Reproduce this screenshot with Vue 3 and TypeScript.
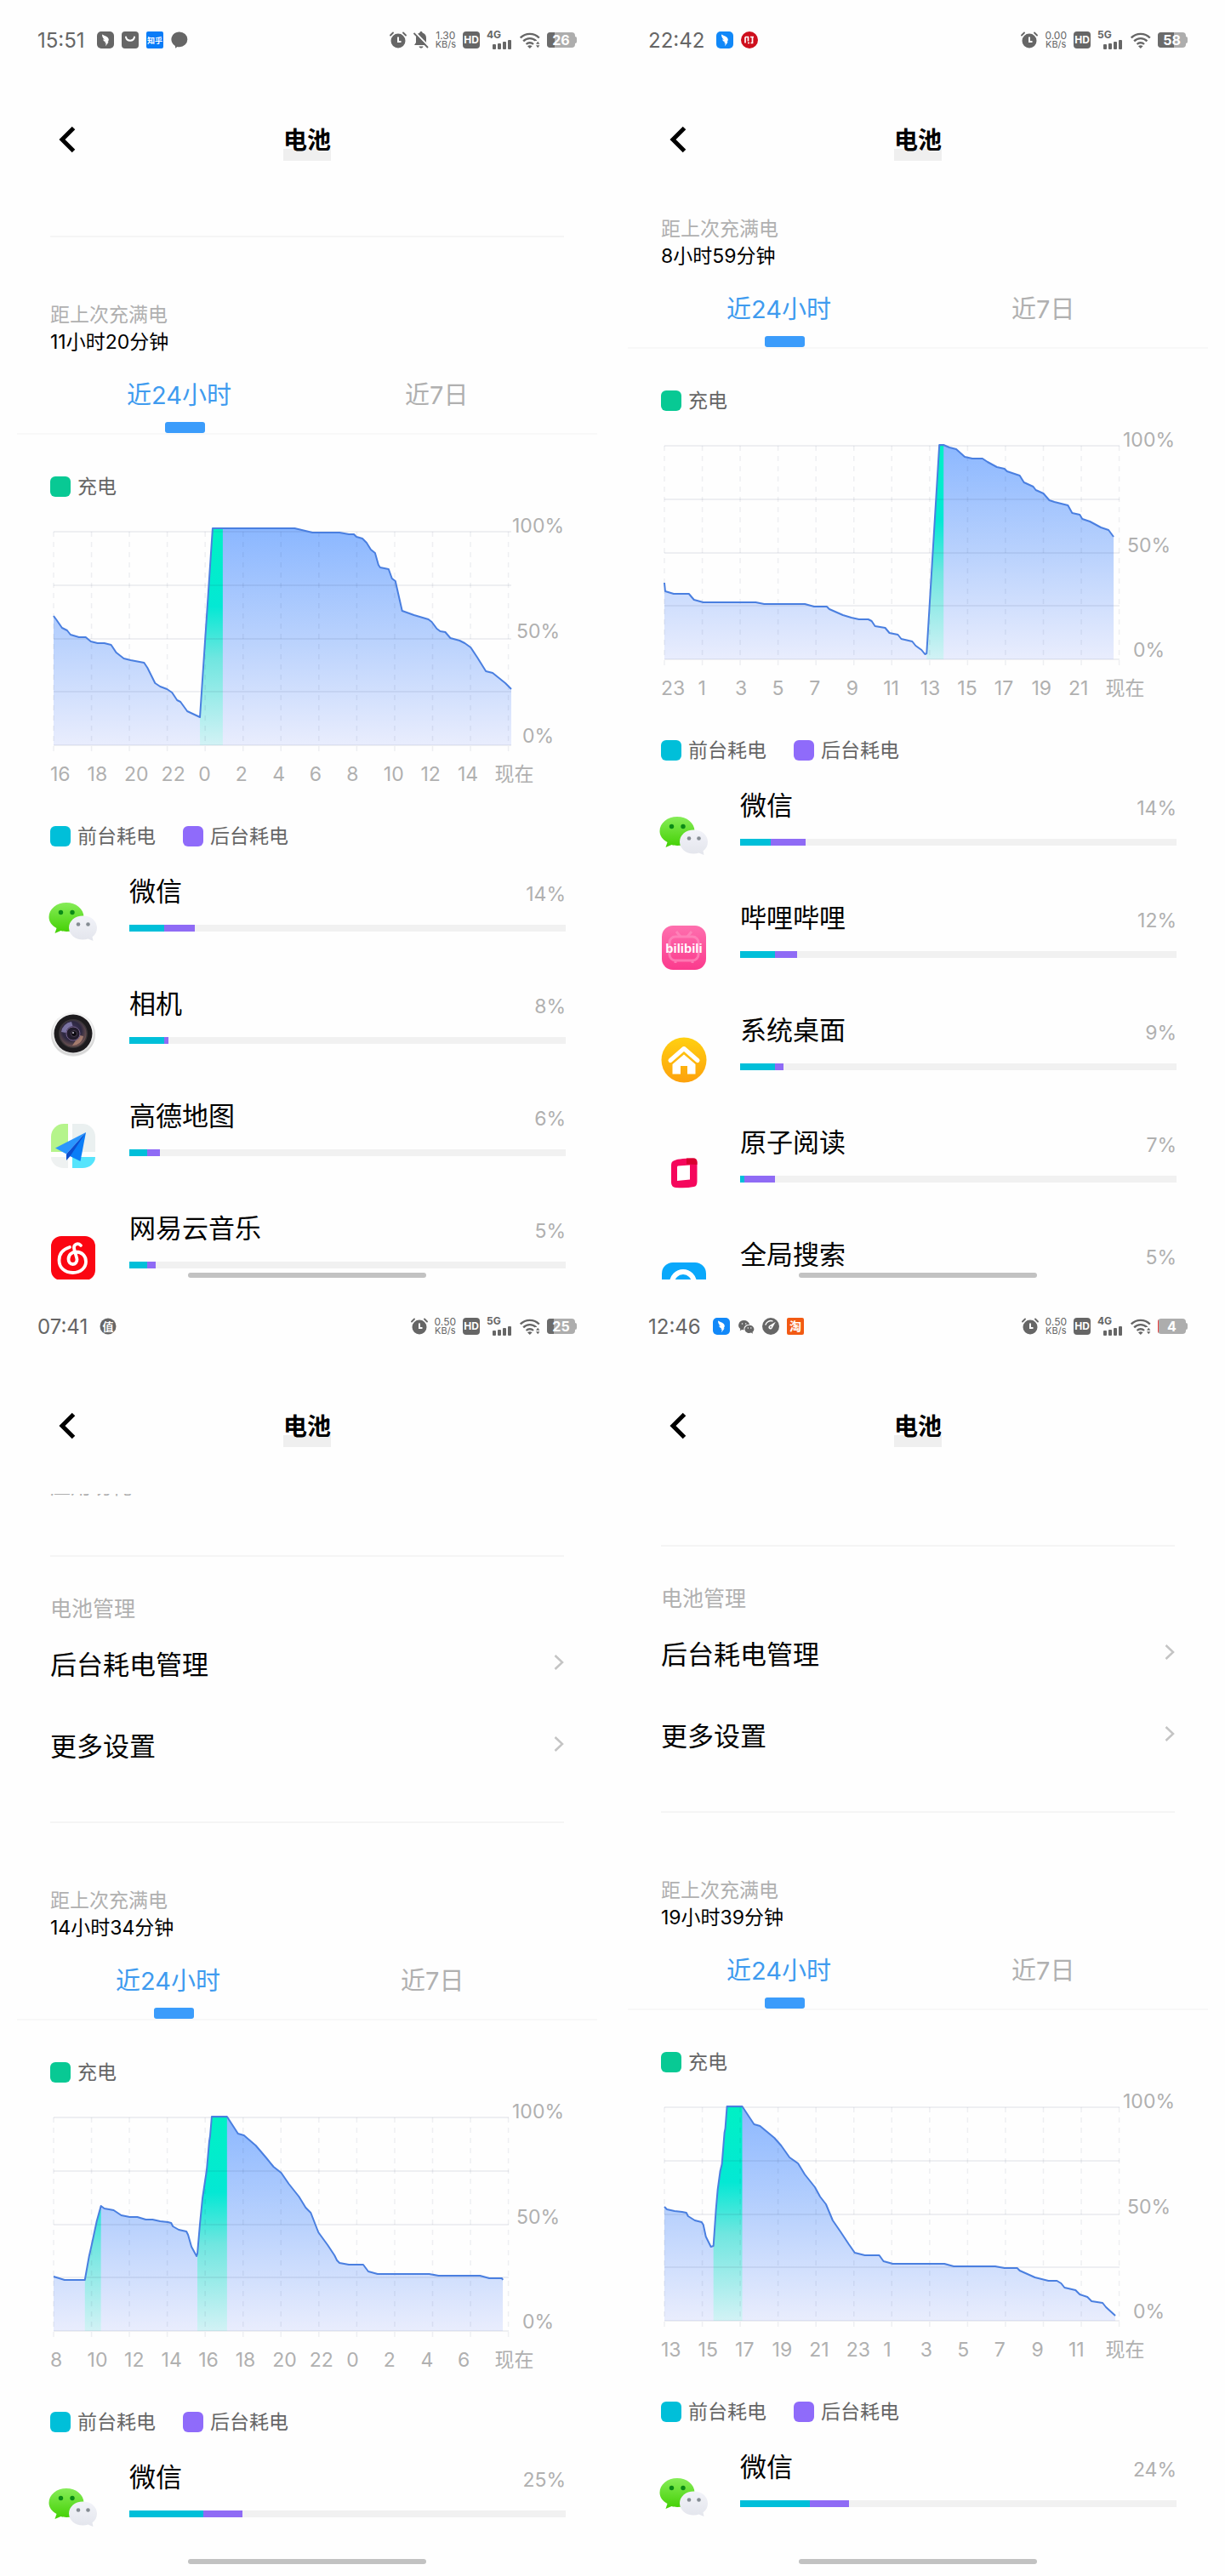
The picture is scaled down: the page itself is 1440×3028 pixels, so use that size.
<script setup lang="ts">
type Point = [number, number]

interface AppUsage {
  name: string
  icon: string
  percent: number
  front: number
  back: number
}

interface Screen {
  id: string
  time: string
  notices: string[]
  muted: boolean
  speed: string
  network: string
  wifiBusy: boolean
  battery: number
  lead: 'divider' | 'none' | 'caption' | 'short'
  manage: boolean
  elapsed: string
  shifted: boolean
  hours: string[]
  gridEnd: number
  points: Point[]
  charging: Point[]
  apps: AppUsage[]
}

const BASE = 275
const GRID_TOP = 24
const GRID_STEP = 63

const screens: Screen[] = [
  {
    id: 's1',
    time: '15:51',
    notices: ['bird', 'bag', 'zhihu', 'chat'],
    muted: true,
    speed: '1.30',
    network: '4G',
    wifiBusy: true,
    battery: 26,
    lead: 'divider',
    manage: false,
    elapsed: '11小时20分钟',
    shifted: true,
    hours: ['16', '18', '20', '22', '0', '2', '4', '6', '8', '10', '12', '14', '现在'],
    gridEnd: 545,
    points: [
      [4, 123], [7, 127], [14, 137], [20, 140], [24, 145], [34, 148], [42, 148], [48, 153], [56, 155], [64, 155],
      [72, 157], [78, 166], [87, 173], [95, 175], [111, 178], [115, 184], [124, 202], [130, 206], [138, 209],
      [144, 213], [150, 222], [154, 224], [162, 235], [177, 242], [192, 20], [204, 20], [289, 20], [310, 25],
      [342, 25], [353, 27], [359, 27], [362, 30], [369, 32], [374, 37], [379, 45], [384, 49], [388, 63], [390, 66],
      [400, 68], [404, 79], [408, 82], [416, 117], [430, 122], [447, 127], [451, 130], [457, 138], [461, 141],
      [467, 142], [473, 149], [484, 152], [490, 155], [497, 160], [505, 172], [515, 188], [523, 190], [538, 202],
      [545, 209],
    ],
    charging: [[177, 204]],
    apps: [
      { name: '微信', icon: 'wechat', percent: 14, front: 8, back: 7 },
      { name: '相机', icon: 'camera', percent: 8, front: 8, back: 1 },
      { name: '高德地图', icon: 'amap', percent: 6, front: 4, back: 3 },
      { name: '网易云音乐', icon: 'music', percent: 5, front: 4, back: 2 },
    ],
  },
  {
    id: 's2',
    time: '22:42',
    notices: ['bird-blue', 'ithome'],
    muted: false,
    speed: '0.00',
    network: '5G',
    wifiBusy: false,
    battery: 58,
    lead: 'none',
    manage: false,
    elapsed: '8小时59分钟',
    shifted: false,
    hours: ['23', '1', '3', '5', '7', '9', '11', '13', '15', '17', '19', '21', '现在'],
    gridEnd: 542,
    points: [
      [4, 185], [5, 195], [15, 198], [33, 198], [39, 205], [50, 208], [112, 208], [122, 210], [170, 210], [181, 213],
      [196, 213], [199, 216], [215, 223], [225, 226], [234, 228], [245, 228], [249, 230], [253, 236], [265, 238],
      [270, 244], [280, 246], [284, 251], [297, 254], [301, 259], [308, 264], [312, 269], [314, 268], [329, 23],
      [334, 23], [341, 26], [349, 28], [359, 37], [368, 39], [380, 39], [386, 43], [397, 49], [406, 51], [409, 54],
      [424, 59], [429, 67], [440, 72], [443, 76], [452, 80], [459, 88], [465, 90], [481, 94], [486, 103], [495, 105],
      [498, 110], [507, 113], [520, 120], [529, 123], [535, 131],
    ],
    charging: [[314, 334]],
    apps: [
      { name: '微信', icon: 'wechat', percent: 14, front: 7, back: 8 },
      { name: '哔哩哔哩', icon: 'bilibili', percent: 12, front: 8, back: 5 },
      { name: '系统桌面', icon: 'home', percent: 9, front: 8, back: 2 },
      { name: '原子阅读', icon: 'reader', percent: 7, front: 1, back: 7 },
      { name: '全局搜索', icon: 'search', percent: 5, front: 3, back: 3 },
    ],
  },
  {
    id: 's3',
    time: '07:41',
    notices: ['zhi'],
    muted: false,
    speed: '0.50',
    network: '5G',
    wifiBusy: true,
    battery: 25,
    lead: 'caption',
    manage: true,
    elapsed: '14小时34分钟',
    shifted: false,
    hours: ['8', '10', '12', '14', '16', '18', '20', '22', '0', '2', '4', '6', '现在'],
    gridEnd: 542,
    points: [
      [4, 211], [17, 215], [41, 215], [46, 187], [49, 174], [55, 146], [60, 128], [64, 131], [75, 133], [84, 139],
      [94, 141], [103, 141], [113, 144], [121, 144], [130, 146], [139, 147], [143, 148], [145, 152], [152, 156],
      [161, 158], [163, 162], [167, 176], [173, 187], [174, 184], [177, 149], [180, 119], [183, 99], [185, 86],
      [188, 52], [189, 46], [191, 23], [209, 23], [222, 43], [229, 45], [243, 57], [255, 71], [264, 82], [273, 89],
      [282, 102], [294, 117], [302, 130], [308, 136], [317, 159], [328, 174], [336, 186], [339, 192], [342, 195],
      [353, 197], [370, 197], [376, 205], [387, 208], [448, 208], [459, 210], [508, 210], [519, 213], [534, 213],
      [535, 215],
    ],
    charging: [[41, 60], [174, 209]],
    apps: [{ name: '微信', icon: 'wechat', percent: 25, front: 17, back: 9 }],
  },
  {
    id: 's4',
    time: '12:46',
    notices: ['bird-blue', 'wechat', 'gauge', 'taobao'],
    muted: false,
    speed: '0.50',
    network: '4G',
    wifiBusy: true,
    battery: 4,
    lead: 'short',
    manage: true,
    elapsed: '19小时39分钟',
    shifted: false,
    hours: ['13', '15', '17', '19', '21', '23', '1', '3', '5', '7', '9', '11', '现在'],
    gridEnd: 542,
    points: [
      [4, 141], [7, 144], [16, 146], [25, 147], [30, 148], [32, 152], [40, 157], [48, 159], [50, 162], [53, 176],
      [59, 188], [62, 187], [65, 144], [67, 121], [70, 99], [72, 91], [75, 54], [76, 49], [78, 23], [96, 23],
      [110, 44], [117, 46], [134, 60], [142, 69], [152, 83], [162, 90], [170, 103], [182, 118], [188, 129], [195, 138],
      [203, 157], [212, 170], [222, 185], [229, 195], [241, 198], [258, 198], [263, 205], [274, 208], [335, 208],
      [346, 211], [395, 211], [406, 213], [421, 213], [424, 216], [442, 224], [458, 228], [468, 228], [473, 231],
      [477, 236], [490, 239], [495, 244], [504, 247], [509, 252], [522, 254], [526, 259], [537, 269],
    ],
    charging: [[62, 96]],
    apps: [{ name: '微信', icon: 'wechat', percent: 24, front: 16, back: 9 }],
  },
]

const gridRows = [0, 1, 2, 3, 4].map((i) => GRID_TOP + i * GRID_STEP - (i > 2 ? 1 : 0))
const gridCols = Array.from({ length: 13 }, (_, i) => 4 + i * 44.8)

function line(points: Point[]): string {
  return points.map(([x, y]) => `${x},${y}`).join(' ')
}

function area(points: Point[], from: number, to: number): string {
  const inside = points.filter(([x]) => x >= from && x <= to)
  return `${from},${BASE} ${line(inside)} ${to},${BASE}`
}

function fullArea(points: Point[]): string {
  return area(points, points[0][0], points[points.length - 1][0])
}
</script>

<template>
  <main class="board">
    <section v-for="s in screens" :key="s.id" class="screen">
      <div class="status">
        <div class="status-left">
          <span class="clock">{{ s.time }}</span>
          <span class="notices">
            <svg v-for="n in s.notices" :key="n" class="notice" viewBox="0 0 20 20" aria-hidden="true">
              <template v-if="n === 'bird' || n === 'bird-blue'">
                <rect width="20" height="20" rx="5" :fill="n === 'bird' ? '#666' : '#1188f8'" />
                <path d="M6 3.500c3 1.600 7.500 2.600 7.800 6 .1 1-.6 2-1.300 2.900l1.200.2-3.700 4.600.8-3.500-1.600-.1c.5-.6.7-1 .6-1.500-1.500-.4-2.400-1.500-2.700-2.800 1 .3 1.400.3 1.900.2C7 8.300 6 6 6 3.500z" fill="#fff" />
              </template>
              <template v-else-if="n === 'bag'">
                <rect width="20" height="20" rx="4" fill="#666" />
                <path d="M5 6.500c1 5.500 9 5.500 10 0" fill="none" stroke="#fff" stroke-width="2" stroke-linecap="round" />
              </template>
              <template v-else-if="n === 'zhihu'">
                <rect width="20" height="20" rx="2" fill="#0a7cf7" />
                <text x="10" y="13.500" text-anchor="middle" font-size="9" font-weight="700" fill="#fff">知乎</text>
              </template>
              <template v-else-if="n === 'chat'">
                <path d="M10 .5a9.300 8.800 0 0 1 0 17.700c-1 0-1.800-.1-2.600-.3L5.200 19.800l-.3-2.900A9 8.800 0 0 1 10 .5z" fill="#666" />
              </template>
              <template v-else-if="n === 'ithome'">
                <circle cx="10" cy="10" r="10" fill="#ce0f1d" />
                <path d="M5 6.500v7M8 13.500h2M5 6.500h3.500v5M11 6.500h4M13.500 6.500v7h-2" fill="none" stroke="#fff" stroke-width="1.700" />
              </template>
              <template v-else-if="n === 'zhi'">
                <circle cx="10" cy="10" r="9.500" fill="#666" />
                <text x="10" y="14.500" text-anchor="middle" font-size="13" font-weight="700" fill="#fff">值</text>
              </template>
              <template v-else-if="n === 'wechat'">
                <path d="M7.500 3a6.500 5.700 0 0 1 6.500 5c-4-.4-7 2.200-6.500 6.200-.9 0-1.700-.1-2.400-.3l-2.300 1.300.5-2.200A6.200 5.700 0 0 1 7.500 3z" fill="#666" />
                <path d="M14 8.800a5.300 4.600 0 0 1 3.600 8l.4 1.900-2-1.100a5.400 4.600 0 1 1-2-8.800z" fill="#666" />
                <g fill="#fff"><circle cx="5.500" cy="7" r=".8" /><circle cx="9.700" cy="7" r=".8" /><circle cx="12.300" cy="12" r=".7" /><circle cx="15.800" cy="12" r=".7" /></g>
              </template>
              <template v-else-if="n === 'gauge'">
                <circle cx="10" cy="10" r="10" fill="#666" />
                <path d="M4 8a6.500 6.500 0 0 1 8-4.200" fill="none" stroke="#fff" stroke-width="1.400" stroke-linecap="round" />
                <path d="M15.800 4.800L11.800 12a2.300 2.300 0 1 1-3-3z" fill="#fff" />
                <circle cx="10" cy="10.800" r=".9" fill="#666" />
              </template>
              <template v-else>
                <rect width="20" height="20" rx="2" fill="#f25a13" />
                <text x="10" y="15" text-anchor="middle" font-size="14" font-weight="700" fill="#fff">淘</text>
              </template>
            </svg>
          </span>
        </div>
        <div class="status-right">
          <svg class="notice" viewBox="0 0 20 20" aria-hidden="true">
            <circle cx="10" cy="11" r="8.500" fill="#666" />
            <path d="M1 4.500L4 1.500M19 4.500L16 1.500" stroke="#666" stroke-width="1.800" stroke-linecap="round" />
            <path d="M10 6.500v5.500h3.500" fill="none" stroke="#fff" stroke-width="2" />
          </svg>
          <svg v-if="s.muted" class="bell" viewBox="0 0 18 20" aria-hidden="true">
            <path d="M9 0c1 0 1.600.7 1.600 1.500 2.900.8 4.400 3.200 4.400 6V13l2 3H1l2-3V7.500c0-2.800 1.500-5.200 4.400-6C7.400.7 8 0 9 0z" fill="#666" />
            <path d="M6.500 17.500h5c-.4 1.500-1.300 2-2.500 2s-2.100-.5-2.500-2z" fill="#666" />
            <path d="M2 1L18 17.500" stroke="#fefefe" stroke-width="2" />
            <path d="M.5 2L17 19" stroke="#666" stroke-width="1.800" />
          </svg>
          <span class="speed"><span class="rate">{{ s.speed }}</span><span>KB/s</span></span>
          <span class="hd">HD</span>
          <span class="signal">
            <span class="network">{{ s.network }}</span>
            <svg class="bars" viewBox="0 0 24 12" aria-hidden="true">
              <g fill="#666"><rect y="6" width="4" height="6" rx="1" /><rect x="6" y="5" width="4" height="7" rx="1" /><rect x="12" y="3" width="4" height="9" rx="1" /><rect x="18" y="1" width="4" height="11" rx="1" /></g>
            </svg>
          </span>
          <svg class="wifi" viewBox="0 0 24 19" aria-hidden="true">
            <g fill="none" stroke="#666" stroke-width="2.400">
              <path d="M.8 6.500a15.500 15.500 0 0 1 22 0" />
              <path d="M4.200 10.300a10.700 10.700 0 0 1 15.200 0" />
              <path d="M7.600 14a6 6 0 0 1 8.400 0" />
            </g>
            <path d="M9 16.200q2.800-2 5.600 0L11.800 19z" fill="#666" />
            <g v-if="s.wifiBusy"><rect x="17.500" y="10" width="7" height="9" fill="#fefefe" /><path d="M19 13.800l2.200-3 2.200 3zM19 15.200l2.200 3 2.200-3z" fill="#666" /></g>
          </svg>
          <span class="battery">
            <span class="battery-body">
              <span class="battery-fill" :class="{ low: s.battery < 10 }" :style="{ width: s.battery + '%' }"></span>
              <span class="battery-text">{{ s.battery }}</span>
            </span>
            <span class="battery-cap"></span>
          </span>
        </div>
      </div>

      <header class="header">
        <button class="back" type="button" aria-label="返回">
          <svg viewBox="0 0 20 32" aria-hidden="true">
            <path d="M17.500 2.500L4 16l13.500 13.500" fill="none" stroke="#000" stroke-width="5" />
          </svg>
        </button>
        <h1 class="title">电池</h1>
      </header>

      <div class="view" :class="'lead-' + s.lead">
        <p v-if="s.lead === 'caption'" class="cut-caption">应用功耗</p>

        <template v-if="s.manage">
          <hr class="divider" />
          <h2 class="group-title">电池管理</h2>
          <nav class="menu">
            <a v-for="item in ['后台耗电管理', '更多设置']" :key="item" href="#" class="menu-item">
              <span>{{ item }}</span>
              <svg viewBox="0 0 12 18" aria-hidden="true">
                <path d="M1.500 1l8.500 8-8.500 8" fill="none" stroke="#c4c4c4" stroke-width="2.500" />
              </svg>
            </a>
          </nav>
        </template>
        <hr v-if="s.lead !== 'none'" class="divider" />

        <div class="since">
          <p class="since-label">距上次充满电</p>
          <p>{{ s.elapsed }}</p>
        </div>

        <div class="tabs" :class="{ shifted: s.shifted }" role="tablist">
          <button class="tab active" type="button" role="tab" aria-selected="true">近24小时</button>
          <button class="tab" type="button" role="tab" aria-selected="false">近7日</button>
        </div>

        <div class="legend charge"><span class="key"><i class="swatch green"></i>充电</span></div>

        <div class="chart">
          <svg viewBox="0 0 546 284" preserveAspectRatio="none" aria-hidden="true">
            <defs>
              <linearGradient :id="s.id + '-blue'" gradientUnits="userSpaceOnUse" x1="0" y1="20" x2="0" y2="275">
                <stop offset="0" stop-color="#8bb7ff" />
                <stop offset="0.5" stop-color="#b8d1fd" />
                <stop offset="1" stop-color="#e9edfd" />
              </linearGradient>
              <linearGradient :id="s.id + '-green'" gradientUnits="userSpaceOnUse" x1="0" y1="20" x2="0" y2="275">
                <stop offset="0" stop-color="#00f1c4" />
                <stop offset="0.36" stop-color="#04e8d4" />
                <stop offset="0.6" stop-color="#70e6e0" />
                <stop offset="1" stop-color="#d2f2f5" />
              </linearGradient>
            </defs>
            <polygon :points="fullArea(s.points)" :fill="`url(#${s.id}-blue)`" />
            <polygon v-for="c in s.charging" :key="c[0]" :points="area(s.points, c[0], c[1])" :fill="`url(#${s.id}-green)`" />
            <g stroke="#1a2a50" stroke-opacity="0.07">
              <line v-for="y in gridRows" :key="y" x1="4" :x2="s.gridEnd" :y1="y" :y2="y" stroke-width="2" />
              <line v-for="x in gridCols" :key="x" :x1="x" :x2="x" y1="24" y2="282" stroke-width="1.500" stroke-dasharray="6 6" />
            </g>
            <polyline :points="line(s.points)" fill="none" stroke="#4a7fe0" stroke-width="2" stroke-linejoin="round" />
          </svg>
          <div class="y-axis"><span>100%</span><span>50%</span><span>0%</span></div>
        </div>
        <div class="x-axis"><span v-for="h in s.hours" :key="h">{{ h }}</span></div>

        <div class="legend usage">
          <span class="key"><i class="swatch cyan"></i>前台耗电</span>
          <span class="key"><i class="swatch violet"></i>后台耗电</span>
        </div>

        <ul class="apps">
          <li v-for="a in s.apps" :key="a.name" class="app">
            <svg class="app-icon" viewBox="0 0 54 54" aria-hidden="true">
              <template v-if="a.icon === 'wechat'">
                <defs>
                  <linearGradient :id="s.id + '-wg'" x1="0" y1="0" x2="0" y2="1"><stop offset="0" stop-color="#86ec58" /><stop offset="1" stop-color="#43d003" /></linearGradient>
                  <linearGradient :id="s.id + '-ww'" x1="0" y1="0" x2="0" y2="1"><stop offset="0" stop-color="#f2f3f9" /><stop offset="1" stop-color="#e3e5ec" /></linearGradient>
                </defs>
                <path d="M19 5c11.500 0 20.500 7.500 20.500 17S30.500 39 19 39c-2.500 0-4.500-.3-6.500-.9L5.500 41l2-6C2 32-1.500 27.500-1.500 22 -1.500 12.500 7.500 5 19 5z" :fill="`url(#${s.id}-wg)`" />
                <ellipse cx="12.500" cy="16.500" rx="2.700" ry="2.800" fill="#0b8a17" /><ellipse cx="26" cy="16.500" rx="2.700" ry="2.800" fill="#0b8a17" />
                <path d="M38.500 20.500c9.500 0 16.500 6.200 16.500 14 0 4.700-2 8.200-5.500 10.700l1 4.800-6-2.400c-1.900.6-3.900.9-6 .9-9.500 0-16.500-6.200-16.500-14s7-14 16.500-14z" :fill="`url(#${s.id}-ww)`" />
                <circle cx="33" cy="30.500" r="2.300" fill="#858c93" /><circle cx="44.500" cy="30.500" r="2.300" fill="#858c93" />
              </template>
              <template v-else-if="a.icon === 'camera'">
                <defs>
                  <radialGradient id="lens" cx="0.450" cy="0.400" r="0.700"><stop offset="0" stop-color="#4a3c66" /><stop offset="0.500" stop-color="#2c2740" /><stop offset="1" stop-color="#8a6658" /></radialGradient>
                  <radialGradient id="rim" cx="0.500" cy="0.450" r="0.550"><stop offset="0.800" stop-color="#f4f4f4" /><stop offset="0.930" stop-color="#d2d2d2" /><stop offset="1" stop-color="#f0f0f0" /></radialGradient>
                </defs>
                <circle cx="27" cy="28" r="26" fill="url(#rim)" />
                <circle cx="27" cy="27" r="22.500" fill="#1d1b1e" />
                <circle cx="27" cy="27" r="17" fill="#3a3538" />
                <circle cx="27" cy="27" r="15.500" fill="url(#lens)" />
                <path d="M13 25a14 14 0 0 1 12-12l1.500 5a9 9 0 0 0-8 8z" fill="#8d86b8" opacity="0.800" />
                <path d="M39 30a13 13 0 0 1-13 11l4-6a9 9 0 0 0 5-6z" fill="#b98b77" opacity="0.800" />
                <circle cx="27" cy="27" r="8" fill="#221c2c" stroke="#74608a" />
                <circle cx="28" cy="27" r="3.500" fill="#0c0a10" stroke="#4b4052" />
                <circle cx="27" cy="26" r="1" fill="#c8c4d4" />
              </template>
              <template v-else-if="a.icon === 'amap'">
                <path d="M1 16A15 15 0 0 1 16 1h5v33H1z" fill="#b5f48b" />
                <path d="M26 1h12a15 15 0 0 1 15 15v18H26z" fill="#eaf0f0" />
                <path d="M1 40h20v13h-5A15 13 0 0 1 1 40z" fill="#eef1f1" />
                <path d="M26 40h27a15 13 0 0 1-15 13H26z" fill="#55e4fc" />
                <path d="M42 11L6 29.500l13 7z" fill="#2a96fd" />
                <path d="M42 11L20 37.500 35.500 45z" fill="#0a7df7" />
                <path d="M42 11L19 36.500v7.500l4.500-5z" fill="#0b4ed0" />
              </template>
              <template v-else-if="a.icon === 'music'">
                <rect x="1" y="1" width="52" height="52" rx="12" fill="#fb0612" />
                <path d="M23 14c-8 2.500-12.500 8-12.500 15.500C10.500 38 17 44 26.500 44S42 38 42 31s-5-11.500-11.500-11.500c-5 0-9 3.500-9 8.500 0 3.500 2 6 5 6s5-2.500 5-5.500c0-2-3.500-11.500-3.500-14 0-4 4.500-6 8-2.500" fill="none" stroke="#fff" stroke-width="3.800" stroke-linecap="round" stroke-linejoin="round" />
              </template>
              <template v-else-if="a.icon === 'bilibili'">
                <defs><linearGradient id="pink" x1="0" y1="0" x2="0" y2="1"><stop offset="0" stop-color="#fe6fae" /><stop offset="1" stop-color="#fb3a8d" /></linearGradient></defs>
                <rect x="1" y="1" width="52" height="52" rx="13" fill="url(#pink)" />
                <g fill="none" stroke="#ff8dbf" stroke-width="3" opacity="0.700"><rect x="10" y="14" width="34" height="28" rx="7" /><path d="M18 8l5 6M36 8l-5 6M17 42v3M37 42v3" /></g>
                <text x="27" y="33" text-anchor="middle" font-size="15" font-weight="700" font-family="Liberation Sans, sans-serif" fill="#fff">bilibili</text>
              </template>
              <template v-else-if="a.icon === 'home'">
                <defs><linearGradient id="gold" x1="0" y1="0" x2="0" y2="1"><stop offset="0" stop-color="#ffd011" /><stop offset="1" stop-color="#fda10c" /></linearGradient></defs>
                <circle cx="27" cy="27" r="26.500" fill="url(#gold)" />
                <path d="M11 27.500l16-14 16 14" fill="none" stroke="#fff" stroke-width="5" stroke-linecap="round" stroke-linejoin="round" />
                <path d="M27 20.500L40.500 32v11.500H31V34h-8v9.500h-9.500V32z" fill="#fff" />
              </template>
              <template v-else-if="a.icon === 'reader'">
                <path d="M14 14q5-3.500 24-3.500 4.500 0 4.500 5v22q0 6-4 6.500-9 2-21 1-5.500-.5-5.500-6V19q0-4 2-5z" fill="#f5075c" />
                <path d="M30 10.500h8q4.500 0 4.500 5V18L30 17.500z" fill="#d8002f" />
                <path d="M20 19.500l14-1v17l-15 1.500V21q0-1.200 1-1.500z" fill="#fff" />
              </template>
              <template v-else>
                <rect x="1" y="1" width="52" height="52" rx="13" fill="#09a8fb" />
                <circle cx="26" cy="25" r="13" fill="none" stroke="#fff" stroke-width="6" />
                <path d="M35 35l7 7" stroke="#fff" stroke-width="5" stroke-linecap="round" />
              </template>
            </svg>
            <div class="app-body">
              <div class="app-line"><span class="app-name">{{ a.name }}</span><span class="app-percent">{{ a.percent }}%</span></div>
              <div class="track">
                <span class="front" :style="{ width: a.front + '%' }"></span>
                <span class="rear" :style="{ width: a.back + '%' }"></span>
              </div>
            </div>
          </li>
        </ul>
      </div>
      <span class="home-bar"></span>
    </section>
  </main>
</template>

<style>
body {
  background: #fefefe;
}
</style>

<style scoped>
.board {
  display: grid;
  grid-template-columns: 1fr 1fr;
  row-gap: 8px;
  padding: 0 2px 12px;
  font-family: Inter, "Noto Sans CJK SC", sans-serif;
  font-size: 23px;
  color: #000;
}

.screen {
  position: relative;
  min-width: 0;
}

h1, h2, p, ul {
  margin: 0;
  padding: 0;
  font-weight: 400;
}

button {
  border: 0;
  padding: 0;
  background: none;
  font-family: inherit;
}

.status {
  display: flex;
  align-items: center;
  justify-content: space-between;
  height: 94px;
  padding: 0 42px;
  color: #666;
}

.status-left,
.status-right,
.notices {
  display: flex;
  align-items: center;
}

.status-left {
  gap: 14px;
}

.status-right {
  gap: 8px;
}

.notices {
  gap: 9px;
}

.clock {
  font-size: 24px;
}

.notice {
  width: 20px;
  height: 20px;
}

.bell {
  width: 18px;
  height: 20px;
}

.speed {
  display: flex;
  flex-direction: column;
  align-items: center;
  font-size: 11px;
  line-height: 10px;
}

.rate {
  font-size: 12px;
}

.hd {
  width: 20px;
  height: 20px;
  border-radius: 4px;
  background: #666;
  color: #fff;
  font-size: 12px;
  font-weight: 700;
  line-height: 20px;
  text-align: center;
}

.signal {
  display: flex;
  flex-direction: column;
  width: 31px;
}

.network {
  font-size: 12px;
  font-weight: 700;
  line-height: 10px;
}

.bars {
  align-self: flex-end;
  width: 24px;
  height: 12px;
}

.wifi {
  width: 24px;
  height: 19px;
}

.battery {
  display: flex;
  align-items: center;
}

.battery-body {
  position: relative;
  width: 33px;
  height: 18px;
  overflow: hidden;
  border-radius: 4px;
  background: #adadad;
  text-align: center;
}

.battery-fill {
  position: absolute;
  inset: 0 auto 0 0;
  background: #6b6b6b;
}

.battery-fill.low {
  background: #ee3b3b;
}

.battery-text {
  position: relative;
  display: block;
  color: #fff;
  font-size: 16px;
  font-weight: 700;
  line-height: 18px;
}

.battery-cap {
  width: 2px;
  height: 8px;
  border-radius: 0 2px 2px 0;
  background: #adadad;
}

.header {
  display: grid;
  grid-template-columns: 1fr auto 1fr;
  align-items: start;
  height: 150px;
  box-sizing: border-box;
  padding: 47px 67px 0;
}

.back {
  display: flex;
  align-items: center;
  width: 48px;
  height: 46px;
}

.back svg {
  width: 20px;
  height: 32px;
}

.title {
  background: linear-gradient(to top, #efefef 14px, transparent 14px);
  font-size: 28px;
  font-weight: 700;
  line-height: 48px;
}

.view {
  height: 1260px;
  box-sizing: border-box;
  overflow: hidden;
}

.lead-divider {
  padding-top: 33px;
}

.lead-none {
  padding-top: 9px;
}

.lead-short {
  padding-top: 60px;
}

.cut-caption {
  margin: -24px 57px 64px;
  color: #b0b0b0;
  font-size: 24px;
  line-height: 32px;
}

.divider {
  height: 2px;
  margin: 0 57px;
  border: 0;
  background: #f5f5f5;
}

.group-title {
  margin: 46px 57px 0;
  color: #b0b0b0;
  font-size: 25px;
  line-height: 30px;
}

.menu {
  margin: 0 57px 43px;
}

.menu-item {
  display: flex;
  align-items: center;
  justify-content: space-between;
  height: 96px;
  color: #000;
  font-size: 31px;
  text-decoration: none;
}

.menu-item svg {
  width: 12px;
  height: 18px;
}

.since {
  margin: 0 57px;
  line-height: 32px;
}

.divider + .since {
  margin-top: 75px;
}

.since-label {
  color: #b0b0b0;
}

.tabs {
  display: flex;
  gap: 212px;
  margin: 26px 18px 0;
  padding-left: 116px;
  border-bottom: 2px solid #f8f8f8;
}

.tabs.shifted {
  gap: 204px;
  padding-left: 129px;
}

.tab {
  display: flex;
  flex-direction: column;
  gap: 10px;
  height: 65px;
  color: #b0b0b0;
  font-size: 29px;
  line-height: 42px;
  white-space: nowrap;
}

.tab.active {
  color: #3f9bef;
}

.tab.active::after {
  content: "";
  width: 47px;
  height: 13px;
  margin-left: 45px;
  border-radius: 3px;
  background: #3b9cfb;
}

.legend {
  display: flex;
  gap: 32px;
  margin: 0 57px;
  color: #666;
  line-height: 24px;
}

.legend.charge {
  margin-top: 49px;
}

.legend.usage {
  margin-top: 46px;
}

.key {
  display: flex;
  align-items: center;
  gap: 8px;
}

.swatch {
  width: 24px;
  height: 24px;
  border-radius: 6px;
}

.green {
  background: #08c994;
}

.cyan {
  background: #00bfd9;
}

.violet {
  background: #8f6bfa;
}

.chart {
  display: flex;
  margin: 17px 57px 0;
}

.chart svg {
  flex: 1;
  min-width: 0;
  height: 284px;
}

.y-axis {
  display: flex;
  flex-direction: column;
  align-items: center;
  justify-content: space-between;
  width: 61px;
  margin: 5px 0 8px;
  color: #b0b0b0;
  line-height: 24px;
}

.x-axis {
  display: grid;
  grid-template-columns: repeat(13, minmax(0, 1fr));
  margin: 10px 95px 0 57px;
  color: #b0b0b0;
  line-height: 30px;
  white-space: nowrap;
}

.apps {
  margin: 32px 55px 0 57px;
  list-style: none;
}

.app {
  display: flex;
  gap: 39px;
  height: 132px;
}

.app-icon {
  flex: none;
  width: 54px;
  height: 54px;
  margin-top: 29px;
  overflow: visible;
}

.app-body {
  flex: 1;
}

.app-line {
  display: flex;
  align-items: baseline;
  justify-content: space-between;
  height: 42px;
  line-height: 42px;
}

.app-name {
  font-size: 31px;
}

.app-percent {
  color: #b0b0b0;
}

.track {
  display: flex;
  height: 8px;
  margin-top: 18px;
  background: #f1f1f1;
}

.front {
  background: #00bfd9;
}

.rear {
  background: #8f6bf5;
}

.home-bar {
  position: absolute;
  bottom: 2px;
  left: 50%;
  width: 280px;
  height: 6px;
  margin-left: -140px;
  border-radius: 3px;
  background: #c2c2c2;
}
</style>
